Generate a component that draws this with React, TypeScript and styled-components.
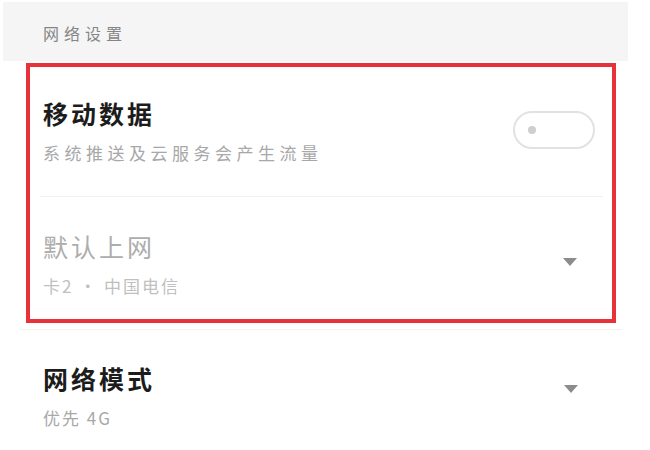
import React from 'react';
import styled, { createGlobalStyle } from 'styled-components';

const GlobalStyle = createGlobalStyle`
  html, body {
    margin: 0;
    padding: 0;
    background: #fff;
    font-family: "Noto Sans CJK SC", "Noto Sans", sans-serif;
  }
`;

const Page = styled('div')`
  width: 650px;
  height: 450px;
  padding-top: 2px;
  box-sizing: border-box;
  overflow: hidden;
`;

const SectionHeader = styled('div')`
  height: 59px;
  margin: 0 22px 0 3px;
  padding: 3px 0 0 40px;
  box-sizing: border-box;
  display: flex;
  align-items: center;
  background: #f5f5f5;
  color: #858585;
  font-size: 16px;
  letter-spacing: 5px;
`;

const HighlightBox = styled('div')`
  margin: 2px 34px 0 26px;
  height: 260px;
  box-sizing: border-box;
  border: 4px solid #e8323a;
`;

const Row = styled('div')<{ $height: number; $right: number; $left?: number }>`
  height: ${(p) => p.$height}px;
  display: flex;
  align-items: center;
  justify-content: space-between;
  padding: 0 ${(p) => p.$right}px 0 ${(p) => p.$left ?? 13}px;
  box-sizing: border-box;
`;

const TextBlock = styled('div')<{ $shift?: number }>`
  display: flex;
  flex-direction: column;
  transform: translateY(${(p) => p.$shift || 0}px);
`;

const Title = styled('div')<{ $muted?: boolean }>`
  font-size: 25px;
  line-height: 30px;
  letter-spacing: 3px;
  font-weight: ${(p) => (p.$muted ? 400 : 700)};
  color: ${(p) => (p.$muted ? '#adadad' : '#1c1c1c')};
`;

const Subtitle = styled('div')<{ $muted?: boolean; $spacing?: number }>`
  margin-top: 15px;
  font-size: 17px;
  line-height: 20px;
  letter-spacing: ${(p) => p.$spacing ?? 4.5}px;
  color: ${(p) => (p.$muted ? '#c0c0c0' : '#a8a8a8')};
`;

const Divider = styled('div')<{ $inset: string; $color: string }>`
  height: 1px;
  margin: ${(p) => p.$inset};
  background: ${(p) => p.$color};
`;

const Toggle = styled('div')`
  width: 82px;
  height: 38px;
  box-sizing: border-box;
  border: 2px solid #e2e2e2;
  border-radius: 19px;
  display: flex;
  align-items: center;
  padding-left: 13px;
  margin-top: -4px;
`;

const Knob = styled('div')`
  width: 8px;
  height: 8px;
  border-radius: 50%;
  background: #cfcfcf;
`;

const Caret = styled('div')<{ $drop?: number }>`
  width: 0;
  height: 0;
  margin-top: ${(p) => p.$drop ?? 0}px;
  border-left: 7px solid transparent;
  border-right: 7px solid transparent;
  border-top: 8px solid #8c8c8c;
`;

export default function App() {
  return (
    <Page>
      <GlobalStyle />
      <SectionHeader>网络设置</SectionHeader>
      <HighlightBox>
        <Row $height={129} $right={17}>
          <TextBlock $shift={-1}>
            <Title>移动数据</Title>
            <Subtitle>系统推送及云服务会产生流量</Subtitle>
          </TextBlock>
          <Toggle>
            <Knob />
          </Toggle>
        </Row>
        <Divider $inset="0 9px 0 10px" $color="#f0f0f0" />
        <Row $height={122} $right={35}>
          <TextBlock $shift={5}>
            <Title $muted>默认上网</Title>
            <Subtitle $muted $spacing={2}>卡2 · 中国电信</Subtitle>
          </TextBlock>
          <Caret $drop={8} />
        </Row>
      </HighlightBox>
      <Divider $inset="6px 28px 0 20px" $color="#f3f3f3" />
      <Row $height={120} $right={72} $left={43}>
        <TextBlock $shift={5}>
          <Title>网络模式</Title>
          <Subtitle $spacing={2}>优先 4G</Subtitle>
        </TextBlock>
        <Caret $drop={-2} />
      </Row>
    </Page>
  );
}
